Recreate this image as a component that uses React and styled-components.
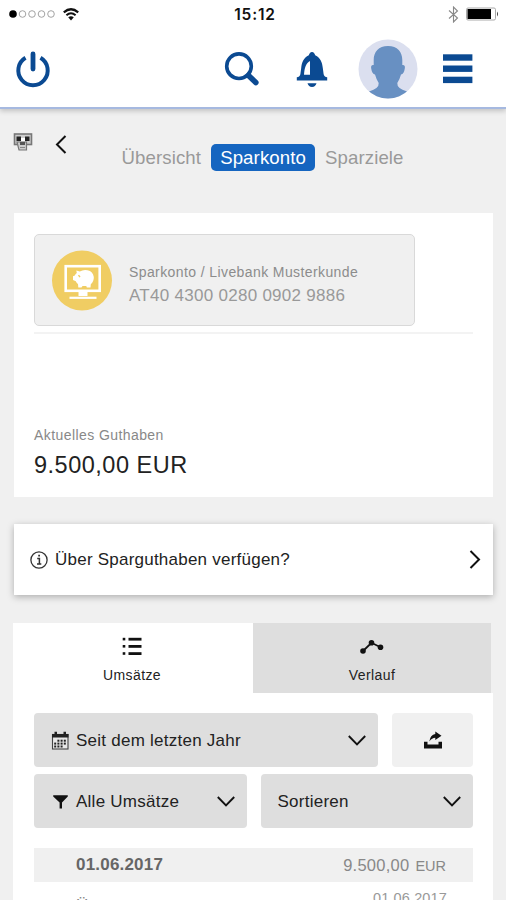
// imports
import React from "react";
import styled, { createGlobalStyle } from "styled-components";

const GlobalStyle = createGlobalStyle`
  * {
    box-sizing: border-box;
  }
  body {
    margin: 0;
    background: #f0f0f0;
    font-family: "Liberation Sans", Arial, sans-serif;
  }
  svg {
    display: block;
    flex: none;
  }
`;

const Screen = styled.div`
  width: 506px;
  height: 900px;
  overflow: hidden;
  background: #f0f0f0;
`;

// top of the phone
const Top = styled.header`
  height: 109px;
  background: #fff;
  border-bottom: 2px solid #a6b9e0;
  box-shadow: 0 2px 5px rgba(0, 0, 0, 0.2);
`;
const StatusBar = styled.div`
  display: grid;
  grid-template-columns: 1fr auto 1fr;
  align-items: center;
  height: 28px;
  padding: 0 7px 0 9px;
`;
const StatusGroup = styled.div`
  display: flex;
  align-items: center;
  justify-content: ${(props) => (props.$end ? "flex-end" : "flex-start")};
  gap: 7px;
`;
const Clock = styled.span`
  padding: 1px 0 0 2px;
  font-family: Inter, "Liberation Sans", sans-serif;
  font-size: 15.5px;
  font-weight: 600;
  letter-spacing: 0.85px;
  color: #111;
`;
const Toolbar = styled.nav`
  display: flex;
  align-items: center;
  height: 80px;
  padding: 0 33px 0 15px;
`;
const IconButton = styled.button`
  display: flex;
  padding: ${(props) => props.$drop || 0}px 0 0;
  border: 0;
  background: none;
  margin-left: ${(props) => props.$left || "0"};
`;

// second navigation
const SubNav = styled.nav`
  display: flex;
  align-items: flex-start;
  height: 104px;
  padding: 24px 0 0 13px;
`;
const Back = styled.div`
  padding: 2px 0 0 22px;
`;
const Links = styled.div`
  display: flex;
  align-items: center;
  height: 28px;
  margin: 10px 0 0 45px;
`;
const NavLink = styled.a`
  height: 27px;
  padding: 0 9.5px;
  border-radius: 5px;
  font-size: 18.6px;
  letter-spacing: 0.12px;
  line-height: 27px;
  color: ${(props) => (props.$active ? "#fff" : "#999")};
  background: ${(props) => (props.$active ? "#1565c0" : "transparent")};
`;

const Text = styled.div`
  font-size: ${(props) => props.$size}px;
  line-height: ${(props) => props.$line || 20}px;
  letter-spacing: ${(props) => props.$gap || 0}px;
  font-weight: ${(props) => (props.$bold ? 700 : 400)};
  color: ${(props) => props.$color || "#222"};
  white-space: nowrap;
`;

// balance
const Balance = styled.section`
  height: 284px;
  margin: 0 13px 0 14px;
  padding: 21px 20px 0;
  background: #fff;
`;
const Account = styled.div`
  display: flex;
  align-items: center;
  width: 381px;
  height: 92px;
  padding-left: 17px;
  border: 1px solid #d9d9d9;
  border-radius: 5px;
  background: #f0f0f0;
`;
const AccountText = styled.div`
  padding: 9px 0 0 16px;
`;
const Amount = styled.div`
  height: 140px;
  margin-top: 6px;
  padding-top: 92px;
  border-top: 2px solid #f3f3f3;
`;

const InfoCard = styled.section`
  display: flex;
  align-items: center;
  height: 71px;
  margin: 27px 13px 0 14px;
  padding: 0 12px 0 16px;
  background: #fff;
  box-shadow: 0 2px 7px rgba(0, 0, 0, 0.28);
`;
const InfoText = styled.div`
  flex: 1;
  padding-left: 7px;
`;

// bookings
const Bookings = styled.section`
  height: 277px;
  margin: 28px 13px 0;
  background: #fff;
  overflow: hidden;
`;
const Tabs = styled.div`
  display: grid;
  grid-template-columns: 240px 238px;
  height: 70px;
  padding-right: 2px;
  background: #f0f0f0;
`;
const Tab = styled.div`
  display: flex;
  flex-direction: column;
  align-items: center;
  gap: 7px;
  padding: 14px ${(props) => (props.$active ? "2px" : "0")} 0 0;
  background: ${(props) => (props.$active ? "#fff" : "#dedede")};
`;
const Filters = styled.div`
  display: flex;
  flex-wrap: wrap;
  gap: 7px 14px;
  width: 439px;
  margin: 20px 0 0 21px;
`;
const Select = styled.div`
  display: flex;
  align-items: center;
  width: ${(props) => props.$width}px;
  height: 54px;
  padding: 1px 12px 0 17px;
  border-radius: 4px;
  background: #dedede;
`;
const SelectText = styled.div`
  flex: 1;
  padding-left: ${(props) => (props.$icon ? "7px" : "0")};
`;
const Share = styled.button`
  display: flex;
  align-items: center;
  justify-content: center;
  width: 81px;
  height: 54px;
  padding: 0;
  border: 0;
  border-radius: 4px;
  background: #f0f0f0;
`;
const DayRow = styled.div`
  display: flex;
  align-items: center;
  justify-content: space-between;
  width: 439px;
  height: 34px;
  margin: 20px 0 0 21px;
  padding: 0 27px 0 42px;
  background: #f0f0f0;
`;
const Sum = styled.div`
  display: flex;
  align-items: baseline;
  gap: 6px;
`;
const BookingRow = styled.div`
  display: flex;
  align-items: flex-start;
  justify-content: space-between;
  width: 439px;
  height: 60px;
  margin-left: 21px;
  padding: 0 26px 0 42px;
`;
const BookingTitle = styled.div`
  padding-top: 14px;
`;
const BookingDate = styled.div`
  padding-top: 6px;
`;

const blue = "#0b4a92";

function Signal() {
  return (
    <svg width="47" height="10" viewBox="0 0 47 10">
      <circle cx="4" cy="5" r="3.8" fill="#000" />
      {[13.5, 23, 32.5, 42].map((x) => (
        <circle key={x} cx={x} cy="5" r="3.3" fill="none" stroke="#999" strokeWidth="0.9" />
      ))}
    </svg>
  );
}

function Wifi() {
  return (
    <svg width="16" height="13" viewBox="0 0 16 13" fill="none" stroke="#111">
      <path d="M0.8 4.3Q8 -1.8 15.2 4.3" strokeWidth="2.2" />
      <path d="M3.4 7.3Q8 3.2 12.6 7.3" strokeWidth="2" />
      <path d="M5.2 9.3Q8 7 10.8 9.3L8 12.4z" fill="#111" stroke="none" />
    </svg>
  );
}

function Bluetooth() {
  return (
    <svg width="11" height="17" viewBox="0 0 11 17" fill="none" stroke="#888" strokeWidth="1.1">
      <path d="M1 4.5L9.5 12L5.5 16V1L9.5 5L1 12.5" />
    </svg>
  );
}

function Battery() {
  return (
    <svg width="33" height="14" viewBox="0 0 33 14">
      <rect x="0.5" y="1" width="29" height="12" rx="1.5" fill="#fff" stroke="#aaa" />
      <rect x="1.5" y="2" width="23.5" height="10" fill="#000" />
      <path d="M31 4.5q2 2.5 0 5z" fill="#444" />
    </svg>
  );
}

function Power() {
  return (
    <svg width="36" height="37" viewBox="0 0 36 37" fill="none" stroke={blue}>
      <path d="M10.5 6.8A14.7 14.7 0 1 0 25.5 6.8" strokeWidth="4" />
      <path d="M18 3V18" strokeWidth="4.8" strokeLinecap="round" />
    </svg>
  );
}

function Search() {
  return (
    <svg width="36" height="36" viewBox="0 0 36 36" fill="none" stroke={blue}>
      <circle cx="15" cy="15.2" r="12.3" strokeWidth="3.6" />
      <path d="M24.5 24.5L31.8 31.5" strokeWidth="5.6" strokeLinecap="round" />
    </svg>
  );
}

function Bell() {
  return (
    <svg width="32" height="36" viewBox="0 0 32 36">
      <path
        d="M16 0C17.8 0 18.5 1.5 19.2 3.2C24.5 5.8 26.3 10.5 26.8 16L27.6 22Q28 25 31.2 25.2V28.5H0.8V25.2Q4 25 4.4 22L5.2 16C5.7 10.5 7.5 5.8 12.8 3.2C13.5 1.5 14.2 0 16 0z"
        fill={blue}
      />
      <path d="M14 9V22.8H8C8.4 16.5 9.6 11.5 14 9z" fill="#fff" />
      <path d="M11.5 31.3H20.5Q19.5 35 16 35T11.5 31.3z" fill={blue} />
    </svg>
  );
}

function Avatar() {
  return (
    <svg width="60" height="60" viewBox="0 0 60 60">
      <defs>
        <clipPath id="avatar">
          <circle cx="30" cy="30" r="29.5" />
        </clipPath>
      </defs>
      <circle cx="30" cy="30" r="29.5" fill="#dbdfef" />
      <path
        clipPath="url(#avatar)"
        d="M30 7C39.5 7 44.3 13 44.3 21V26Q47.5 25.5 46.8 29.5Q46 35 43 35.5Q41.5 41 39.3 44Q38.8 49.5 49 52.5V60H11V52.5Q21.2 49.5 20.7 44Q18.5 41 17 35.5Q14 35 13.2 29.5Q12.5 25.5 15.7 26V21C15.7 13 20.5 7 30 7z"
        fill="#6890c2"
      />
    </svg>
  );
}

function Menu() {
  return (
    <svg width="30" height="30" viewBox="0 0 30 30" fill={blue}>
      <rect x="0" y="0.3" width="29.4" height="6.4" />
      <rect x="0" y="11.5" width="29.4" height="6.4" />
      <rect x="0" y="22.7" width="29.4" height="6.4" />
    </svg>
  );
}

function Atm() {
  return (
    <svg width="20" height="19" viewBox="0 0 20 19">
      <rect x="1.5" y="1" width="17" height="10.5" fill="#ccc" stroke="#777" strokeWidth="1.6" />
      <path d="M3.5 3.5H8V8H3.5zM12 3.5H16.5V8H12z" fill="#222" />
      <path d="M8 5H12V8.5H8z" fill="#fff" />
      <path d="M4 9H13.5V17H6z" fill="#ccc" stroke="#777" strokeWidth="1.2" />
      <path d="M7 9H12V12H7z" fill="#555" />
      <path d="M7 14.5H12" stroke="#888" />
    </svg>
  );
}

function Chevron({ dir, color = "#111" }) {
  if (dir === "down") {
    return (
      <svg width="18" height="11" viewBox="0 0 18 11" fill="none" stroke={color} strokeWidth="1.9">
        <path d="M0.8 1L9 9.3L17.2 1" />
      </svg>
    );
  }
  return (
    <svg width="12" height="19" viewBox="0 0 12 19" fill="none" stroke={color} strokeWidth="2">
      <path d={dir === "left" ? "M10.5 1L2 9.5L10.5 18" : "M1.5 1L10 9.5L1.5 18"} />
    </svg>
  );
}

function SavingsLogo() {
  return (
    <svg width="61" height="61" viewBox="0 0 61 61">
      <circle cx="30" cy="30.5" r="30" fill="#f0cd63" />
      <rect x="13.7" y="16.2" width="34" height="24.6" fill="none" stroke="#fff" strokeWidth="2.6" />
      <path d="M26.5 42H35.5V46H26.5z" fill="#fff" />
      <path d="M17.5 47.8H44.5" stroke="#fff" strokeWidth="2.2" />
      <path
        d="M24.3 20.5L27.8 21.6Q31.5 19.3 35.5 20.3Q41 21.5 41.8 27Q42 31.5 38.8 34.3L38.5 37.5H34.8L34.3 36H30.5L29.5 37.5H26.3L26 34Q24.7 33.2 23.8 31.2L21 30V26.3L22.8 25.5Q23.2 24 24.8 23z"
        fill="#fff"
      />
      <path d="M26.5 25.2L28 27.2" stroke="#efcc61" strokeWidth="1.4" />
    </svg>
  );
}

function Info() {
  return (
    <svg width="18" height="18" viewBox="0 0 18 18" fill="none" stroke="#333">
      <circle cx="9" cy="9" r="8.1" strokeWidth="1.3" />
      <path d="M7.2 7.5H9.4V13M7 13H11.3" strokeWidth="1.5" />
      <path d="M8.2 4.7H10" strokeWidth="1.8" />
    </svg>
  );
}

function List() {
  return (
    <svg width="20" height="19" viewBox="0 0 20 19" fill="#111">
      {[0.8, 8, 15.2].map((y) => (
        <g key={y}>
          <rect x="0.7" y={y} width="2.6" height="2.6" />
          <rect x="6.5" y={y} width="13" height="2.8" />
        </g>
      ))}
    </svg>
  );
}

function Graph() {
  return (
    <svg width="24" height="19" viewBox="0 0 24 19" fill="#111">
      <path d="M3 14L11.5 5.8L20.5 10.3" fill="none" stroke="#111" strokeWidth="1.8" />
      <circle cx="3" cy="14" r="2.8" />
      <circle cx="11.5" cy="5.8" r="2.8" />
      <circle cx="20.5" cy="10.3" r="2.8" />
    </svg>
  );
}

function Calendar() {
  return (
    <svg width="18" height="20" viewBox="0 0 18 20" fill="#222">
      <rect x="1.5" y="3.5" width="15.5" height="14.5" fill="#e8e8e8" stroke="#444" strokeWidth="1.1" />
      <rect x="1" y="3" width="16.5" height="3.5" />
      <path d="M3.5 0.8H6V4H3.5zM12.5 0.8H15V4H12.5z" />
      {[8.7, 11.6, 14.5].map((y) => (
        <g key={y}>
          {y > 9 && <rect x="3.2" y={y} width="2" height="2" />}
          <rect x="6.4" y={y} width="2" height="2" />
          <rect x="9.6" y={y} width="2" height="2" />
          {y < 14 && <rect x="12.8" y={y} width="2" height="2" />}
        </g>
      ))}
    </svg>
  );
}

function Funnel() {
  return (
    <svg width="18" height="16" viewBox="0 0 18 16" fill="#111">
      <path d="M2.2 1.2H16.8V2.6L11 8.5V14.5H8.6V8.5L2.2 2.6z" />
    </svg>
  );
}

function ShareIcon() {
  return (
    <svg width="20" height="18" viewBox="0 0 20 18" fill="#111">
      <path d="M1 10.8H4.5V13.5H15.5V10.8H19V17.5H1z" />
      <path d="M6.3 10.5Q7.3 3.6 12.3 3V0.5L18.5 4.8L12.3 9V6.8Q9 6.8 6.3 10.5z" />
    </svg>
  );
}

function App() {
  return (
    <Screen>
      <GlobalStyle />
      <Top>
        <StatusBar>
          <StatusGroup>
            <Signal />
            <Wifi />
          </StatusGroup>
          <Clock>15:12</Clock>
          <StatusGroup $end>
            <Bluetooth />
            <Battery />
          </StatusGroup>
        </StatusBar>
        <Toolbar>
          <IconButton $drop={2}>
            <Power />
          </IconButton>
          <IconButton $left="auto" $drop={2}>
            <Search />
          </IconButton>
          <IconButton $left="36px" $drop={4}>
            <Bell />
          </IconButton>
          <IconButton $left="30px" $drop={1}>
            <Avatar />
          </IconButton>
          <IconButton $left="25px" $drop={2}>
            <Menu />
          </IconButton>
        </Toolbar>
      </Top>

      <SubNav>
        <Atm />
        <Back>
          <Chevron dir="left" />
        </Back>
        <Links>
          <NavLink>Übersicht</NavLink>
          <NavLink $active>Sparkonto</NavLink>
          <NavLink>Sparziele</NavLink>
        </Links>
      </SubNav>

      <Balance>
        <Account>
          <SavingsLogo />
          <AccountText>
            <Text $size={14} $gap={0.4} $line={22} $color="#8c8c8c">
              Sparkonto / Livebank Musterkunde
            </Text>
            <Text $size={17} $gap={0.28} $line={25} $color="#999">
              AT40 4300 0280 0902 9886
            </Text>
          </AccountText>
        </Account>
        <Amount>
          <Text $size={14} $gap={0.42} $line={18} $color="#888">
            Aktuelles Guthaben
          </Text>
          <Text $size={23.5} $gap={0.5} $line={42}>
            9.500,00 EUR
          </Text>
        </Amount>
      </Balance>

      <InfoCard>
        <Info />
        <InfoText>
          <Text $size={17} $gap={0.23}>
            Über Sparguthaben verfügen?
          </Text>
        </InfoText>
        <Chevron dir="right" />
      </InfoCard>

      <Bookings>
        <Tabs>
          <Tab $active>
            <List />
            <Text $size={14} $gap={0.4} $line={24}>
              Umsätze
            </Text>
          </Tab>
          <Tab>
            <Graph />
            <Text $size={14} $gap={0.4} $line={24}>
              Verlauf
            </Text>
          </Tab>
        </Tabs>
        <Filters>
          <Select $width={344}>
            <Calendar />
            <SelectText $icon>
              <Text $size={17} $gap={0.25} $line={21}>
                Seit dem letzten Jahr
              </Text>
            </SelectText>
            <Chevron dir="down" />
          </Select>
          <Share>
            <ShareIcon />
          </Share>
          <Select $width={212.5}>
            <Funnel />
            <SelectText $icon>
              <Text $size={17} $gap={0.25} $line={21}>
                Alle Umsätze
              </Text>
            </SelectText>
            <Chevron dir="down" />
          </Select>
          <Select $width={212.5}>
            <SelectText>
              <Text $size={17} $gap={0.25} $line={21}>
                Sortieren
              </Text>
            </SelectText>
            <Chevron dir="down" />
          </Select>
        </Filters>
        <DayRow>
          <Text $size={17} $gap={0.2} $bold $color="#666">
            01.06.2017
          </Text>
          <Sum>
            <Text $size={16.5} $gap={0.25} $color="#888">
              9.500,00
            </Text>
            <Text $size={14.5} $color="#888">
              EUR
            </Text>
          </Sum>
        </DayRow>
        <BookingRow>
          <BookingTitle>
            <Text $size={17} $color="#888">
              Ü
            </Text>
          </BookingTitle>
          <BookingDate>
            <Text $size={14.5} $gap={0.15} $color="#999">
              01.06.2017
            </Text>
          </BookingDate>
        </BookingRow>
      </Bookings>
    </Screen>
  );
}

export default App;
